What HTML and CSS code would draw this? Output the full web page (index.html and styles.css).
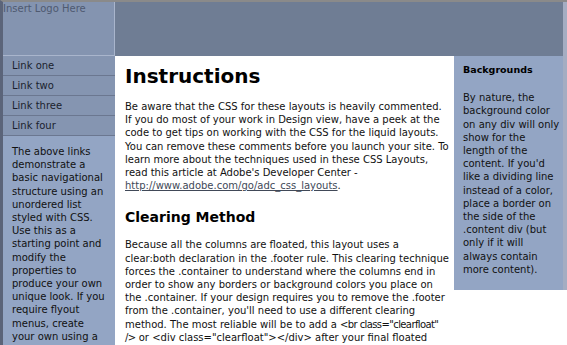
FILE: index.html
```html
<!DOCTYPE html>
<html lang="en">
<head>
<meta charset="utf-8">
<title>Liquid layout</title>
<link rel="stylesheet" href="styles.css">
</head>
<body>
<div class="page">
  <header class="header">
    <div class="logo">Insert Logo Here</div>
  </header>
  <div class="main">
    <aside class="sidebar1">
      <ul class="nav">
        <li><a href="#">Link one</a></li>
        <li><a href="#">Link two</a></li>
        <li><a href="#">Link three</a></li>
        <li><a href="#">Link four</a></li>
      </ul>
      <p>The above links demonstrate a basic navigational structure using an unordered list styled with CSS. Use this as a starting point and modify the properties to produce your own unique look. If you require flyout menus, create your own using a Spry menu, a menu widget from Adobe's Exchange or a variety of other javascript or CSS solutions.</p>
    </aside>
    <article class="content">
      <h1>Instructions</h1>
      <p>Be aware that the CSS for these layouts is heavily commented. If you do most of your work in Design view, have a peek at the code to get tips on working with the CSS for the liquid layouts. You can remove these comments before you launch your site. To learn more about the techniques used in these CSS Layouts, read this article at Adobe's Developer Center - <a href="#">http://www.adobe.com/go/adc_css_layouts</a>.</p>
      <h2>Clearing Method</h2>
      <p>Because all the columns are floated, this layout uses a clear:both declaration in the .footer rule. This clearing technique forces the .container to understand where the columns end in order to show any borders or background colors you place on the .container. If your design requires you to remove the .footer from the .container, you'll need to use a different clearing method. The most reliable will be to add a <span class="code">&lt;br class="clearfloat" /&gt;</span> or &lt;div class="clearfloat"&gt;&lt;/div&gt; after your final floated column (but before the .container closes). This will have the same clearing effect.</p>
    </article>
    <aside class="sidebar2">
      <h4>Backgrounds</h4>
      <p>By nature, the background color on any div will only show for the length of the content. If you'd like a dividing line instead of a color, place a border on the side of the .content div (but only if it will always contain more content).</p>
    </aside>
  </div>
</div>
</body>
</html>
```
FILE: styles.css
```css
html, body {
  margin: 0;
  padding: 0;
}
body {
  background: #fff;
  font-family: "DejaVu Sans", Verdana, sans-serif;
  font-size: 10px;
  line-height: 13.2px;
  color: #111;
  overflow: hidden;
}
.page {
  width: 567px;
  height: 345px;
  box-sizing: border-box;
  border-top: 2px solid #8a8a8a;
  border-left: 3px solid #5b6479;
  overflow: hidden;
}
.header {
  display: flex;
  height: 54px;
  background: #6f7d94;
  border-right: 4px solid #a4adc2;
}
.logo {
  width: 111px;
  height: 53px;
  background: #8494b0;
  border-right: 1px solid #a9b5cc;
  border-bottom: 1px solid #a9b5cc;
  color: #4f5a70;
  font-size: 10px;
  line-height: 13px;
}
.main {
  display: grid;
  grid-template-columns: 112px 339px 113px;
  align-items: start;
}
.sidebar1 {
  align-self: stretch;
  background: #93a5c4;
  min-height: 289px;
}
.nav {
  list-style: none;
  margin: 0;
  padding: 0;
}
.nav li {
  height: 16px;
  padding: 3px 0 0 9px;
  line-height: 13px;
  background: #8595b1;
  border-bottom: 1px solid #6b7790;
}
.nav a {
  display: block;
  color: #1b1f2e;
  text-decoration: none;
}
.sidebar1 p {
  margin: 0;
  padding: 9px 8px 0 9px;
}
.content {
  padding: 8px 3.5px 0 10px;
}
.content h1 {
  margin: 0 0 12px;
  font-size: 20px;
  line-height: 24px;
  font-weight: bold;
  color: #000;
}
.content h2 {
  margin: 17px 0 12px;
  font-size: 14px;
  line-height: 17px;
  font-weight: bold;
  color: #000;
}
.content p {
  margin: 0;
}
.content a {
  color: #414958;
  text-decoration: underline;
}
.code {
  letter-spacing: -0.6px;
}
.sidebar2 {
  background: #93a5c4;
  border-right: 4px solid #a4adc2;
  padding: 7px 3.2px 14px 9px;
}
.sidebar2 h4 {
  margin: 0 0 15px;
  font-size: 9.5px;
  line-height: 13.2px;
  font-weight: bold;
  color: #000;
}
.sidebar2 p {
  margin: 0;
}
```
